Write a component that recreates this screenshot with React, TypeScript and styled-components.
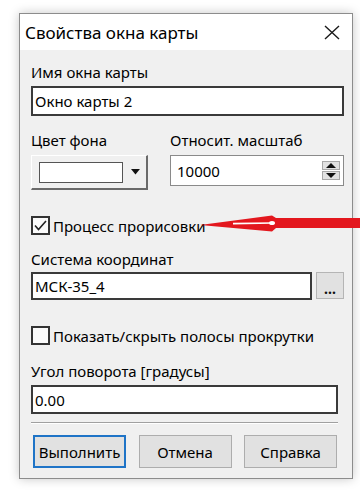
import React from "react";
import styled, { createGlobalStyle } from "styled-components";

const Global = createGlobalStyle`
  html, body { margin: 0; padding: 0; background: #ffffff; }
  body { font-family: "Noto Sans", "Liberation Sans", sans-serif; color: #000; }
  * { box-sizing: border-box; }
`;

const Page = styled.div`
  position: relative;
  width: 360px;
  height: 490px;
  padding: 13px 0 0 19px;
  overflow: hidden;
`;

const Window = styled.div`
  width: 334px;
  height: 466px;
  border: 1px solid #8c8c8c;
  background: #f0f0f0;
  display: flex;
  flex-direction: column;
  box-shadow: 0 0 10px rgba(0, 0, 0, 0.22);
`;

const TitleBar = styled.div`
  height: 36px;
  flex: none;
  background: #ffffff;
  display: flex;
  align-items: center;
  justify-content: space-between;
  padding: 0 12px 0 5px;
  font-size: 17px;
`;

const Body = styled.div`
  flex: 1;
  display: flex;
  flex-direction: column;
  padding: 12px 8px 0 11px;
`;

const Label = styled.div<{ $mt?: number }>`
  font-size: 15px;
  line-height: 20px;
  height: 20px;
  flex: none;
  margin-top: ${(p) => p.$mt ?? 0}px;
  white-space: nowrap;
`;

const TextInput = styled.div<{ $mt?: number; $h: number; $mr?: number; $light?: boolean; $grow?: boolean }>`
  height: ${(p) => p.$h}px;
  margin-top: ${(p) => p.$mt ?? 0}px;
  margin-right: ${(p) => p.$mr ?? 0}px;
  background: #ffffff;
  border: ${(p) => (p.$light ? "1px solid #8a8a8a" : "2px solid #3a3a3a")};
  display: flex;
  align-items: center;
  padding-left: ${(p) => (p.$light ? 6 : 2)}px;
  font-size: 15px;
  flex: ${(p) => (p.$grow ? "1 1 0" : "none")};
  min-width: 0;
`;

const Row = styled.div<{ $mt?: number; $gap: number }>`
  display: flex;
  flex: none;
  gap: ${(p) => p.$gap}px;
  margin-top: ${(p) => p.$mt ?? 0}px;
`;

const Col = styled.div<{ $w?: number }>`
  display: flex;
  flex-direction: column;
  ${(p) => (p.$w ? `width: ${p.$w}px; flex: none;` : "flex: 1;")}
`;

const ColorButton = styled.div`
  margin-top: 5px;
  height: 35px;
  display: flex;
  align-items: center;
  padding: 0 6px 0 7px;
  border-top: 1px solid #ffffff;
  border-left: 1px solid #ffffff;
  border-right: 2px solid #6a6a6a;
  border-bottom: 2px solid #6a6a6a;
  background: #f0f0f0;
  gap: 8px;
`;

const Swatch = styled.div`
  width: 85px;
  height: 21px;
  background: #ffffff;
  border: 1px solid #555;
`;

const NumberBox = styled(TextInput)`
  margin-top: 5px;
  justify-content: space-between;
  padding-right: 3px;
`;

const Spin = styled.div`
  display: flex;
  flex-direction: column;
  gap: 1px;
`;

const SpinBtn = styled.div`
  width: 18px;
  height: 9px;
  background: #e2e2e2;
  border: 1px solid #a8a8a8;
  display: flex;
  align-items: center;
  justify-content: center;
`;

const CheckRow = styled.div<{ $mt: number }>`
  display: flex;
  flex: none;
  align-items: center;
  gap: 3px;
  margin-top: ${(p) => p.$mt}px;
  height: 19px;
  font-size: 15px;
`;

const Box = styled.div`
  width: 19px;
  height: 19px;
  border: 2px solid #333;
  background: #fafafa;
  display: flex;
  align-items: center;
  justify-content: center;
`;

const DotsButton = styled.div`
  width: 28px;
  height: 27px;
  flex: none;
  background: #e1e1e1;
  border: 1px solid #b5b5b5;
  display: flex;
  align-items: flex-end;
  justify-content: center;
  padding-bottom: 4px;
  font-size: 14px;
  font-weight: bold;
  line-height: 10px;
  color: #111;
`;

const Separator = styled.div`
  flex: none;
  margin-top: 8px;
  margin-right: 6px;
  height: 2px;
  border-top: 1px solid #a0a0a0;
  border-bottom: 1px solid #ffffff;
`;

const ButtonRow = styled.div`
  display: flex;
  flex: none;
  justify-content: space-between;
  margin-top: 11px;
  margin-right: 7px;
  padding-left: 2px;
`;

const Button = styled.div<{ $default?: boolean }>`
  width: 93px;
  height: 33px;
  background: #e1e1e1;
  border: ${(p) => (p.$default ? "2px solid #1f74c7" : "1px solid #adadad")};
  display: flex;
  align-items: center;
  justify-content: center;
  font-size: 15px;
`;

const Arrow = styled.svg`
  position: absolute;
  left: 195px;
  top: 210px;
`;

export default function App() {
  return (
    <Page>
      <Global />
      <Window>
        <TitleBar>
          <span>Свойства окна карты</span>
          <svg width="16" height="15" viewBox="0 0 16 15">
            <path d="M1 1 L15 14 M15 1 L1 14" stroke="#1a1a1a" strokeWidth="1.4" fill="none" />
          </svg>
        </TitleBar>
        <Body>
          <Label>Имя окна карты</Label>
          <TextInput $mt={4} $h={30}>Окно карты 2</TextInput>

          <Row $mt={14} $gap={22}>
            <Col $w={117}>
              <Label>Цвет фона</Label>
              <ColorButton>
                <Swatch />
                <svg width="9" height="6" viewBox="0 0 9 6">
                  <path d="M0 0 H9 L4.5 5.5 Z" fill="#111" />
                </svg>
              </ColorButton>
            </Col>
            <Col>
              <Label>Относит. масштаб</Label>
              <NumberBox $h={31} $light>
                <span>10000</span>
                <Spin>
                  <SpinBtn>
                    <svg width="10" height="5" viewBox="0 0 10 5">
                      <path d="M0 5 H10 L5 0 Z" fill="#111" />
                    </svg>
                  </SpinBtn>
                  <SpinBtn>
                    <svg width="10" height="5" viewBox="0 0 10 5">
                      <path d="M0 0 H10 L5 5 Z" fill="#111" />
                    </svg>
                  </SpinBtn>
                </Spin>
              </NumberBox>
            </Col>
          </Row>

          <CheckRow $mt={26}>
            <Box>
              <svg width="13" height="11" viewBox="0 0 13 11">
                <path d="M1 5.5 L4.5 9.5 L12 1" stroke="#222" strokeWidth="1.6" fill="none" />
              </svg>
            </Box>
            <span>Процесс прорисовки</span>
          </CheckRow>

          <Label $mt={14}>Система координат</Label>
          <Row $mt={3} $gap={4}>
            <TextInput $h={28} $grow>МСК-35_4</TextInput>
            <DotsButton>...</DotsButton>
          </Row>

          <CheckRow $mt={26}>
            <Box />
            <span>Показать/скрыть полосы прокрутки</span>
          </CheckRow>

          <Label $mt={16}>Угол поворота [градусы]</Label>
          <TextInput $mt={4} $h={29} $mr={6}>0.00</TextInput>

          <Separator />

          <ButtonRow>
            <Button $default>Выполнить</Button>
            <Button>Отмена</Button>
            <Button>Справка</Button>
          </ButtonRow>
        </Body>
      </Window>
      <Arrow width="165" height="26" viewBox="195 210 165 26">
        <path
          d="M200 225 L272 215.5 L276 218 L360 218 L360 228 L276 228 L272 231.5 Z"
          fill="#e3171e"
        />
        <path d="M233 223.6 L272 223" stroke="#ffffff" strokeWidth="1.6" fill="none" />
        <ellipse cx="272" cy="223" rx="3" ry="2" fill="#ffffff" />
      </Arrow>
    </Page>
  );
}
